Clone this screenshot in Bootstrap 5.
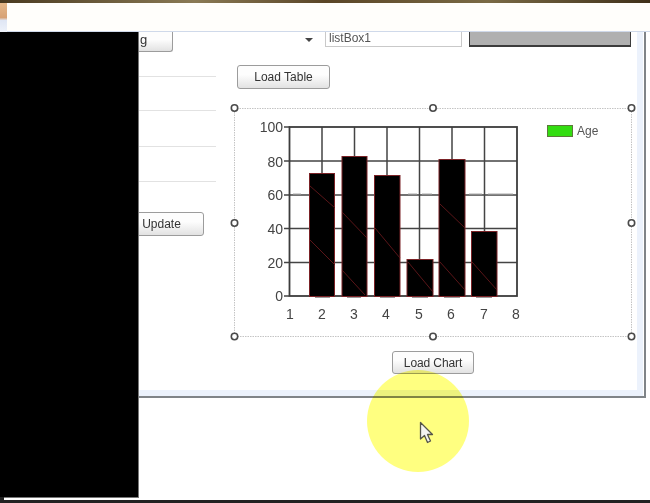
<!DOCTYPE html>
<html lang="en">
<head>
<meta charset="utf-8">
<title>Chart designer</title>
<link rel="stylesheet" href="https://cdn.jsdelivr.net/npm/bootstrap@5.3.0/dist/css/bootstrap.min.css">
<style>
html,body{margin:0;padding:0;width:650px;height:503px;overflow:hidden;background:#fff}
.stage{width:650px;height:503px;overflow:hidden;font-family:"Liberation Sans",Arial,sans-serif;color:#333;filter:blur(.35px)}
.topstrip{position:absolute;left:0;top:0;width:650px;height:3px;background:linear-gradient(90deg,#4a3a20,#8a7a55 30%,#5a4526 50%,#7a6a45 75%,#3f3019)}
.appicon{position:absolute;left:0;top:3px;width:7px;height:29px;background:linear-gradient(#e6b98a,#d7a276 50%,#dfe6f4 60%,#eef2fa)}
.whiteband{position:absolute;left:7px;top:3px;width:643px;height:29px;background:#fffefb;border-bottom:1px solid #cfd9ea}
.formwin{position:absolute;left:100px;top:32px;width:546px;height:366px;background:#fff;border-right:2px solid #808488;border-bottom:2px solid #808488}
.formedge{position:absolute;right:1px;top:0;bottom:0;width:6px;background:#ecf2fc}
.formedgeb{position:absolute;left:0;right:1px;bottom:0;height:6px;background:#ecf2fc}
.winbtn{position:absolute;margin:0;padding:0;font-size:12px;line-height:1;color:#333;background:linear-gradient(#fdfdfd 40%,#e2e2e2);border:1px solid #9c9c9c;border-radius:3px}
.btn-clip{left:100px;top:32px;width:73px;height:20px;border-top:0;border-radius:0 0 3px 3px;text-align:left;padding-left:39px;font-size:13px;padding-bottom:4px}
.btn-table{left:237px;top:65px;width:93px;height:24px}
.btn-update{left:100px;top:212px;width:104px;height:24px;padding-left:19px;text-align:center}
.btn-chart{left:392px;top:351px;width:82px;height:23px;letter-spacing:-.1px}
.comboarrow{position:absolute;left:305px;top:38px;width:0;height:0;border-left:4px solid transparent;border-right:4px solid transparent;border-top:4px solid #444}
.listboxa{position:absolute;left:325px;top:32px;width:137px;height:15px;border:1px solid #c9c9c9;border-top:0;font-size:12px;line-height:12px;padding-left:3px;color:#555;background:#fff}
.graybox{position:absolute;left:469px;top:32px;width:162px;height:15px;background:#b0b0b0;border-style:solid;border-color:#3c3c3c;border-width:0 1px 2px 1px}
.rule{position:absolute;left:138px;width:78px;height:1px;background:#e2e2e2}
.rule-a{top:76px}
.rule-b{top:110px}
.rule-c{top:146px}
.rule-d{top:181px}
.chartsvg{position:absolute;left:0;top:0}
.blackout{position:absolute;left:0;top:32px;width:139px;height:466px;background:#000;border-right:1px solid #777;border-bottom:1px solid #777}
.bottombar{position:absolute;left:0;top:500px;width:650px;height:3px;background:#222}
.leftbar{position:absolute;left:0;top:497px;width:4px;height:3px;background:#222}
.spot{position:absolute;left:367px;top:370px;width:102px;height:102px;border-radius:50%;background:#ffff80;mix-blend-mode:multiply}
.pointer{position:absolute;left:419px;top:421px}
</style>
</head>
<body>
<div class="stage position-relative">
  <div class="topstrip"></div>
  <div class="appicon"></div>
  <div class="formwin">
    <div class="formedge"></div>
    <div class="formedgeb"></div>
  </div>
  <div class="whiteband"></div>
  <button type="button" class="winbtn btn-clip">g</button>
  <div class="comboarrow"></div>
  <div class="listboxa">listBox1</div>
  <div class="graybox"></div>
  <div class="rule rule-a"></div>
  <div class="rule rule-b"></div>
  <div class="rule rule-c"></div>
  <div class="rule rule-d"></div>
  <button type="button" class="winbtn btn-table">Load Table</button>
  <button type="button" class="winbtn btn-update">Update</button>
  <button type="button" class="winbtn btn-chart">Load Chart</button>

  <svg class="chartsvg" width="650" height="503" viewBox="0 0 650 503" font-family="Liberation Sans, Arial, sans-serif">
    <rect x="234.500" y="108.500" width="397" height="228" fill="none" stroke="#c4c4c4" stroke-width="1" stroke-dasharray="1.500 1"/>
    <g stroke="#444" stroke-width="1.500" fill="none">
      <path d="M322 127V296M354.500 127V296M387 127V296M419.500 127V296M452 127V296M484.500 127V296"/>
      <path d="M289.500 161H517M289.500 195H517M289.500 228.500H517M289.500 262.500H517"/>
      <path d="M284 127H290M284 161H289M284 195H289M284 228.500H289M284 262.500H289M284 296H289"/>
    </g>
    <rect x="289.500" y="127" width="227.500" height="169" fill="none" stroke="#3c3c3c" stroke-width="1.800"/>
    <path d="M293 194H301M408 194H417M422 194H432M469 194H482M488 194H513" stroke="#a8a8a8" stroke-width="1"/>
    <path d="M315 297.500H330M347 297.500H361M380 297.500H395M412 297.500H428M444 297.500H460M476 297.500H492" stroke="#999" stroke-width="1"/>
    <g fill="#000" stroke="#7a2226" stroke-width="1">
      <rect x="309.500" y="173.500" width="25" height="123"/>
      <rect x="342" y="156.500" width="25" height="140"/>
      <rect x="374.500" y="175.500" width="25.500" height="121"/>
      <rect x="407" y="259.500" width="26" height="37"/>
      <rect x="439" y="159.500" width="26" height="137"/>
      <rect x="471.500" y="231.500" width="25.500" height="65"/>
    </g>
    <g stroke="#5a1518" stroke-width="1" fill="none">
      <path d="M310 186L335 208M310 240L335 265M342 212L367 238M342 270L365 295M375 228L400 258M408 262L433 292M440 204L465 228M440 262L465 290M472 262L497 290"/>
    </g>
    <g font-size="14" fill="#444" text-anchor="end">
      <text x="283" y="132">100</text>
      <text x="283" y="167">80</text>
      <text x="283" y="200">60</text>
      <text x="283" y="234">40</text>
      <text x="283" y="268">20</text>
      <text x="283" y="301">0</text>
    </g>
    <g font-size="14" fill="#444" text-anchor="middle">
      <text x="290" y="319">1</text>
      <text x="322" y="319">2</text>
      <text x="354" y="319">3</text>
      <text x="386" y="319">4</text>
      <text x="419" y="319">5</text>
      <text x="451" y="319">6</text>
      <text x="484" y="319">7</text>
      <text x="516" y="319">8</text>
    </g>
    <rect x="547.500" y="125.500" width="25" height="11" fill="#33dd11" stroke="#5c7a3a"/>
    <text x="577" y="135" font-size="12" fill="#555">Age</text>
    <g fill="#fff" stroke="#4a4a4a" stroke-width="1.600">
      <circle cx="234.500" cy="108" r="3.200"/>
      <circle cx="433" cy="108" r="3.200"/>
      <circle cx="631.500" cy="108" r="3.200"/>
      <circle cx="234.500" cy="223" r="3.200"/>
      <circle cx="631.500" cy="223" r="3.200"/>
      <circle cx="234.500" cy="336.500" r="3.200"/>
      <circle cx="433" cy="336.500" r="3.200"/>
      <circle cx="631.500" cy="336.500" r="3.200"/>
    </g>
  </svg>

  <div class="blackout"></div>
  <div class="leftbar"></div>
  <div class="bottombar"></div>
  <div class="spot"></div>
  <svg class="pointer" width="16" height="24" viewBox="0 0 16 24">
    <path d="M1.500 1.500V18L5.500 14.500L8.500 21.500L11.500 20L8.500 13.500L13.500 13.500Z" fill="#f4f4f0" stroke="#55554a" stroke-width="1.300" stroke-linejoin="round"/>
  </svg>
</div>
<script src="https://cdn.jsdelivr.net/npm/bootstrap@5.3.0/dist/js/bootstrap.bundle.min.js"></script>
</body>
</html>
